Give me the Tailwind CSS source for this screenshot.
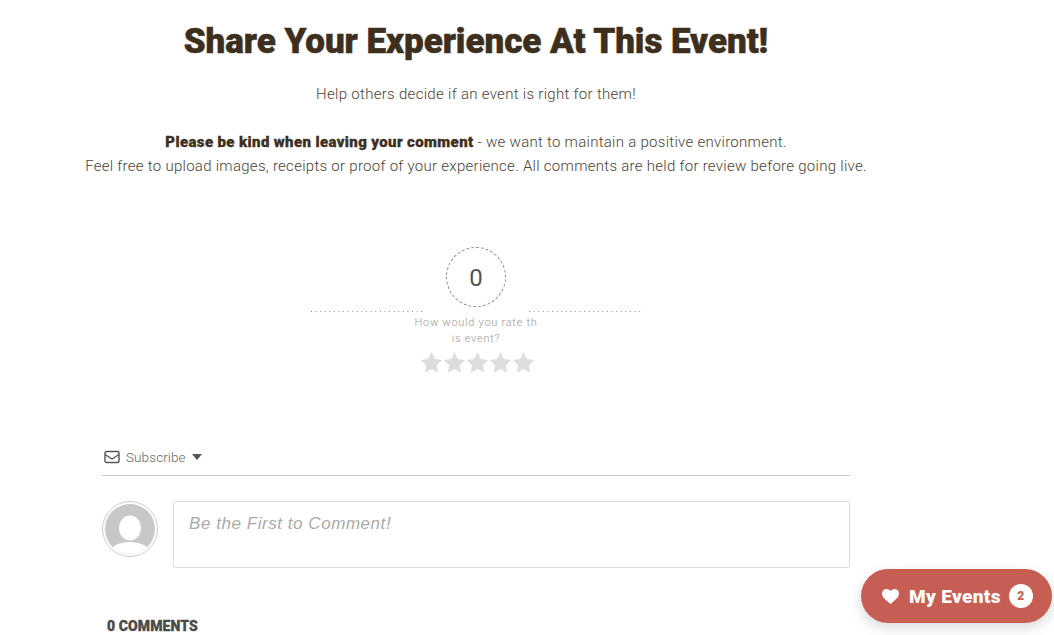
<!DOCTYPE html>
<html lang="en">
<head>
  <meta charset="UTF-8" />
  <title>Share Your Experience</title>
  <script src="https://cdn.jsdelivr.net/npm/@tailwindcss/browser@4"></script>
</head>
<body class="bg-white h-[635px] overflow-hidden relative font-['Roboto',sans-serif]">

  <main class="w-[952px] flex flex-col items-center">
    <h1 class="mt-[19px] h-[46px] leading-[46px] text-[35px] font-black text-[#3d2f1d] tracking-[-0.05px] [-webkit-text-stroke:0.5px_#3d2f1d]">Share Your Experience At This Event!</h1>

    <p class="mt-[17px] h-[24px] leading-[24px] text-[15px] font-light text-[#4a4238] tracking-[0.3px]">Help others decide if an event is right for them!</p>

    <div class="mt-[24px] text-center text-[15px] leading-[24px] font-light text-[#4a4238] tracking-[0.28px]">
      <p><strong class="font-black text-[#3d2f1d] tracking-[0.37px] [-webkit-text-stroke:0.3px_#3d2f1d]">Please be kind when leaving your comment</strong> - we want to maintain a positive environment.</p>
      <p>Feel free to upload images, receipts or proof of your experience. All comments are held for review before going live.</p>
    </div>

    <!-- rating -->
    <section class="mt-[69px] w-[332px] flex flex-col items-center">
      <div class="w-[60px] h-[60px] pt-[1px] rounded-full border border-dashed border-[#888] flex items-center justify-center text-[24px] text-[#555]">0</div>
      <div class="mt-[4px] w-full flex justify-between pl-[1px]">
        <span class="w-[113px] h-[1px] bg-[linear-gradient(to_right,#888_1px,transparent_1px)] bg-[length:4.6px_1px]"></span>
        <span class="w-[113px] h-[1px] bg-[linear-gradient(to_right,#888_1px,transparent_1px)] bg-[length:4.6px_1px]"></span>
      </div>
      <p class="mt-[3px] w-[124px] text-center text-[11px] leading-[16px] tracking-[0.73px] text-[#999999] break-all font-light">How would you rate this event?</p>
      <div class="mt-[4px] ml-[3px] flex">
        <svg class="w-[23px] h-[23px] fill-[#dddddd]" viewBox="0 0 24 24"><path d="M12 1l3.4 7.3 7.9 1-5.800 5.500 1.500 7.900L12 18.800l-7 3.900 1.500-7.900L.7 9.300l7.900-1z"/></svg>
        <svg class="w-[23px] h-[23px] fill-[#dddddd]" viewBox="0 0 24 24"><path d="M12 1l3.4 7.3 7.9 1-5.800 5.500 1.500 7.900L12 18.800l-7 3.900 1.500-7.900L.7 9.300l7.900-1z"/></svg>
        <svg class="w-[23px] h-[23px] fill-[#dddddd]" viewBox="0 0 24 24"><path d="M12 1l3.4 7.3 7.9 1-5.800 5.500 1.500 7.900L12 18.800l-7 3.900 1.500-7.900L.7 9.300l7.900-1z"/></svg>
        <svg class="w-[23px] h-[23px] fill-[#dddddd]" viewBox="0 0 24 24"><path d="M12 1l3.4 7.3 7.9 1-5.800 5.500 1.500 7.900L12 18.800l-7 3.900 1.500-7.900L.7 9.300l7.900-1z"/></svg>
        <svg class="w-[23px] h-[23px] fill-[#dddddd]" viewBox="0 0 24 24"><path d="M12 1l3.4 7.3 7.9 1-5.800 5.500 1.500 7.900L12 18.800l-7 3.900 1.500-7.900L.7 9.300l7.900-1z"/></svg>
      </div>
    </section>

    <!-- comments -->
    <section class="mt-[63px] w-[748px]">
      <div class="h-[39px] pl-[2px] pt-[2px] flex items-center border-b border-[#cccccc] text-[#666]">
        <svg class="w-[16px] h-[14px]" viewBox="0 0 16 14" fill="none" stroke="#555" stroke-width="1.4"><rect x="1" y="1.500" width="14" height="11" rx="1.500"/><path d="M1 4.500l7 4.500 7-4.500"/></svg>
        <span class="ml-[6px] text-[13.5px] font-light tracking-[0.1px]">Subscribe</span>
        <span class="ml-[6px] w-0 h-0 border-x-[5.5px] border-x-transparent border-t-[6px] border-t-[#555]"></span>
      </div>

      <div class="mt-[25px] flex gap-[15px]">
        <div class="w-[56px] h-[56px] rounded-full border border-[#cccccc] p-[2px] shrink-0">
          <svg class="w-full h-full" viewBox="0 0 50 50">
            <defs><clipPath id="avatarClip"><circle cx="25" cy="25" r="25"/></clipPath></defs>
            <circle cx="25" cy="25" r="25" fill="#c8c8c8"/>
            <g clip-path="url(#avatarClip)" fill="#fff">
              <ellipse cx="25" cy="24" rx="11" ry="12.500"/>
              <ellipse cx="25" cy="50" rx="21" ry="12"/>
            </g>
          </svg>
        </div>
        <div class="flex-1 h-[67px] border border-[#dddddd] rounded-[2px] pl-[15px] pt-[11px] font-['Liberation_Sans',sans-serif] italic text-[17px] leading-[21px] tracking-[0.55px] text-[#aaaaaa]">Be the First to Comment!</div>
      </div>

      <h2 class="mt-[48px] ml-[5px] text-[14px] leading-[20px] font-black text-[#4a4a4a] tracking-[0.1px] [-webkit-text-stroke:0.3px_#4a4a4a]">0 COMMENTS</h2>
    </section>
  </main>

  <!-- floating widget -->
  <button class="absolute left-[861px] top-[569px] w-[191px] h-[54px] rounded-[27px] bg-[#c75e54] shadow-[0_5px_14px_rgba(0,0,0,0.15)] flex items-center pl-[22px] text-white">
    <svg class="w-[17px] h-[15px] -ml-[1px] fill-white" viewBox="0 0 24 21"><path d="M12 21C5 15 0 11.500 0 6.500 0 2.800 2.900 0 6.500 0 8.700 0 10.800 1.100 12 2.900 13.200 1.100 15.300 0 17.500 0 21.100 0 24 2.800 24 6.500 24 11.500 19 15 12 21z"/></svg>
    <span class="ml-[10px] pt-[2px] text-[19px] font-black tracking-[0.35px]">My Events</span>
    <span class="ml-[8px] w-[24px] h-[24px] rounded-full bg-white text-[#c75e54] text-[12px] font-black flex items-center justify-center">2</span>
  </button>

</body>
</html>
